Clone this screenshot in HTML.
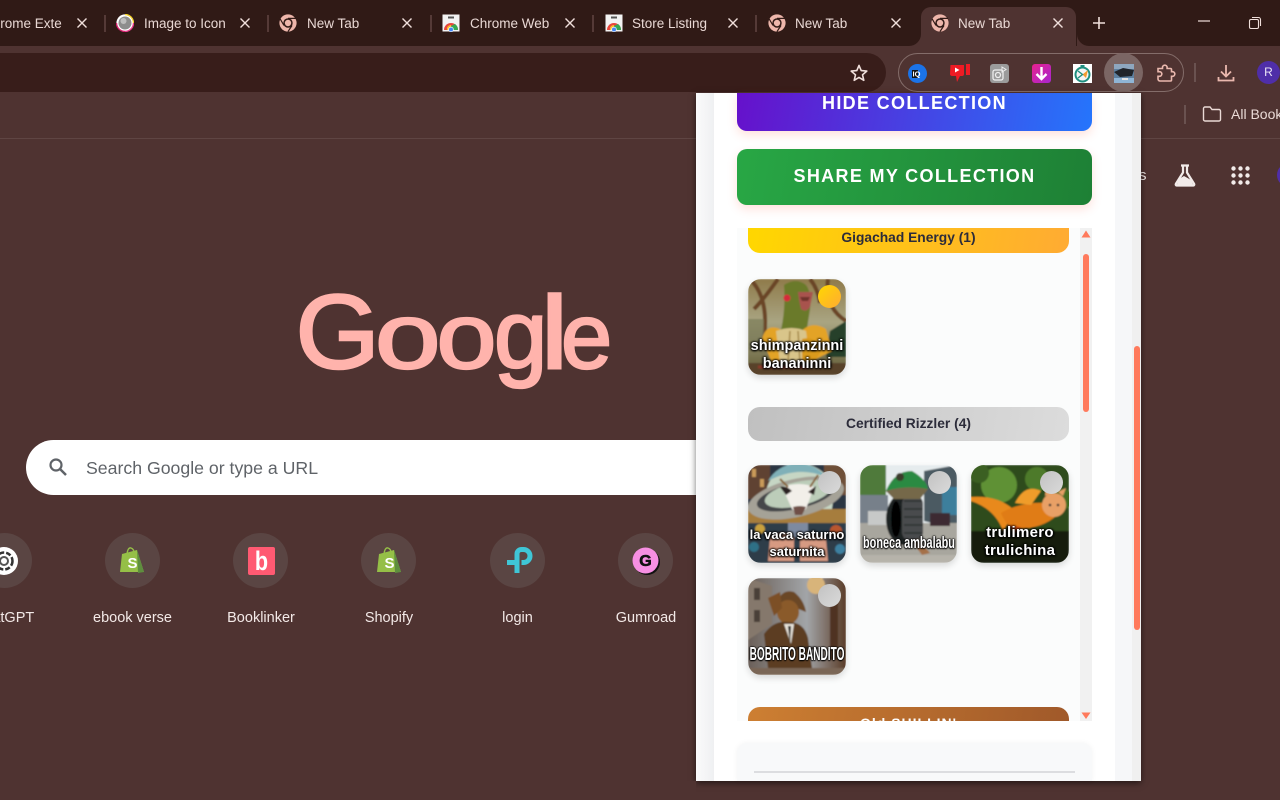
<!DOCTYPE html>
<html><head><meta charset="utf-8"><title>New Tab</title>
<style>
*{box-sizing:border-box}
html,body{margin:0;padding:0;width:1280px;height:800px;overflow:hidden;background:#4f3331;font-family:"Liberation Sans",sans-serif}
.a{position:absolute}
.tt{position:absolute;top:15px;font-size:13.5px;line-height:17px;color:#e9d8d4;white-space:nowrap;overflow:hidden}
.sep{position:absolute;top:15px;width:2px;height:17px;background:#553a37}
.x{position:absolute;top:16px;width:14px;height:14px}
.lbl{position:absolute;top:609px;width:120px;text-align:center;font-size:14.5px;line-height:18px;color:#f3e9e7}
.tile{position:absolute;top:533px;width:55px;height:55px;border-radius:50%;background:#5a4543}
.hd{position:absolute;left:748px;width:321px;text-align:center;font-size:13.8px;font-weight:bold;color:#2c2c3a;border-radius:0 0 12px 12px}
.card{position:absolute;width:98px;height:98px;border-radius:13px;overflow:hidden;box-shadow:0 3px 7px rgba(0,0,0,.14)}
.card svg{position:absolute;left:0;top:0}
.cap{position:absolute;left:-50%;width:200%;text-align:center;color:#fff;font-weight:bold;font-size:14.5px;line-height:18px;white-space:nowrap;text-shadow:0 0 2px #000,0 1px 2px #000,1px 0 2px #000,-1px 0 2px #000}
.dot{position:absolute;left:70px;top:6px;width:23px;height:23px;border-radius:50%;background:linear-gradient(135deg,#c2c2c2,#dadada)}
</style></head><body>

<div class="a" style="left:0;top:0;width:1280px;height:46px;background:#301a16"></div>
<div class="a" style="left:0;top:46px;width:1280px;height:46px;background:#4f3331"></div>
<div class="a" style="left:-30px;top:53px;width:916px;height:39px;border-radius:20px;background:#381d1a"></div>
<div class="a" style="left:921px;top:7px;width:155px;height:39px;background:#4f3331;border-radius:10px 10px 0 0"></div>
<svg class="a" style="left:909px;top:34px" width="180" height="12"><path d="M0 12A12 12 0 0 0 12 0V12ZM180 12A12 12 0 0 1 168 0V12Z" fill="#4f3331"/></svg>

<div class="tt" style="left:0;width:62px;text-indent:-17px">Chrome Extensions</div>
<div class="tt" style="left:144px;width:81px">Image to Icon</div>
<div class="tt" style="left:307px;width:82px">New Tab</div>
<div class="tt" style="left:470px;width:79px">Chrome Web Store</div>
<div class="tt" style="left:632px;width:84px">Store Listing</div>
<div class="tt" style="left:795px;width:82px">New Tab</div>
<div class="tt" style="left:958px;width:82px">New Tab</div>

<div class="sep" style="left:104px"></div><div class="sep" style="left:267px"></div><div class="sep" style="left:430px"></div><div class="sep" style="left:592px"></div><div class="sep" style="left:755px"></div>

<svg width="0" height="0" style="position:absolute"><defs>
<symbol id="xx" viewBox="0 0 14 14"><path d="M2.500 2.500L11.500 11.500M11.500 2.500L2.500 11.500" stroke="#f0dfdb" stroke-width="1.400"/></symbol>
<symbol id="chr" viewBox="0 0 18 18"><circle cx="9" cy="9" r="8.600" fill="#eeb6ab"/><circle cx="9" cy="9" r="4.700" fill="#301a16"/><circle cx="9" cy="9" r="3.200" fill="#eeb6ab"/><path d="M9 4.400H17M5 11.500L1.200 5M13 11.500L9 17.600" stroke="#301a16" stroke-width="1.200"/></symbol>
<symbol id="cws" viewBox="0 0 18 18"><rect x="0.500" y="0.500" width="17" height="17" fill="#f3f3f3"/><rect x="6" y="2.500" width="6" height="2" fill="#555"/><path d="M2 16A7 7 0 0 1 16 16Z" fill="#e8453c"/><path d="M9 16L5 16A4 4 0 0 1 9 11Z" fill="#f9bb2d"/><path d="M9 16H16A7 7 0 0 0 13 10L9 12Z" fill="#34a853"/><circle cx="9" cy="15.500" r="2.700" fill="#fff"/><circle cx="9" cy="15.500" r="2" fill="#4285f4"/></symbol>
<filter id="b" x="0" y="0" width="100%" height="100%"><feGaussianBlur stdDeviation=".7"/></filter>
</defs></svg>

<svg class="a x" style="left:75px"><use href="#xx" width="14" height="14"/></svg>
<svg class="a x" style="left:238px"><use href="#xx" width="14" height="14"/></svg>
<svg class="a x" style="left:400px"><use href="#xx" width="14" height="14"/></svg>
<svg class="a x" style="left:563px"><use href="#xx" width="14" height="14"/></svg>
<svg class="a x" style="left:726px"><use href="#xx" width="14" height="14"/></svg>
<svg class="a x" style="left:889px"><use href="#xx" width="14" height="14"/></svg>
<svg class="a x" style="left:1051px"><use href="#xx" width="14" height="14"/></svg>

<svg class="a" style="left:116px;top:14px" width="18" height="18"><circle cx="9" cy="9" r="8.600" fill="#fff"/><path d="M9 .5A8.500 8.500 0 0 1 17.500 9" stroke="#f6d32d" stroke-width="1.400" fill="none"/><path d="M17.500 9A8.500 8.500 0 0 1 9 17.500" stroke="#e83e8c" stroke-width="1.400" fill="none"/><path d="M.5 9A8.500 8.500 0 0 0 9 17.500" stroke="#d6246e" stroke-width="1.400" fill="none"/><circle cx="9" cy="9" r="6.500" fill="#8d8d8d"/><circle cx="7.500" cy="7" r="3" fill="#bdbdbd"/></svg>
<svg class="a" style="left:279px;top:14px" width="18" height="18"><use href="#chr" width="18" height="18"/></svg>
<svg class="a" style="left:442px;top:14px" width="18" height="18"><use href="#cws" width="18" height="18"/></svg>
<svg class="a" style="left:605px;top:14px" width="18" height="18"><use href="#cws" width="18" height="18"/></svg>
<svg class="a" style="left:768px;top:14px" width="18" height="18"><use href="#chr" width="18" height="18"/></svg>
<svg class="a" style="left:931px;top:14px" width="18" height="18"><use href="#chr" width="18" height="18"/></svg>

<svg class="a" style="left:1091px;top:15px" width="16" height="16"><path d="M8 2V14M2 8H14" stroke="#f0dfdb" stroke-width="1.600"/></svg>
<svg class="a" style="left:1196px;top:15px" width="16" height="14"><path d="M2 6H14" stroke="#f0dfdb" stroke-width="1.200"/></svg>
<svg class="a" style="left:1247px;top:15px" width="16" height="16"><rect x="2.500" y="4.500" width="9" height="9" rx="1.500" fill="none" stroke="#f0dfdb" stroke-width="1.100"/><path d="M5 2.500H11.500A2 2 0 0 1 13.500 4.500V11" fill="none" stroke="#f0dfdb" stroke-width="1.100"/></svg>

<svg class="a" style="left:849px;top:63px" width="20" height="20" viewBox="0 0 20 20"><path d="M10 2.400L12.200 7.600 17.800 8.100 13.500 11.800 14.800 17.300 10 14.400 5.200 17.300 6.500 11.800 2.200 8.100 7.800 7.600Z" fill="none" stroke="#f0dfdb" stroke-width="1.600" stroke-linejoin="round"/></svg>

<div class="a" style="left:898px;top:53px;width:286px;height:39px;border-radius:20px;border:1px solid #846d6a"></div>
<div class="a" style="left:1104px;top:53px;width:39px;height:39px;border-radius:50%;background:#7b6664"></div>
<svg class="a" style="left:908px;top:64px" width="19" height="19"><circle cx="9.500" cy="9.500" r="9.500" fill="#1b73e8"/><rect x="4" y="6" width="6" height="8" fill="#111"/><text x="4.500" y="12.500" font-size="7.500" font-weight="bold" fill="#fff" font-family="Liberation Sans">IQ</text></svg>
<svg class="a" style="left:949px;top:62px" width="22" height="21" viewBox="0 0 22 21"><path d="M1.500 3H15V12Q15 14 13 14H11L8 20 7 14H3.500Q1 14 1 12Z" fill="#ee1b24"/><rect x="17" y="2" width="4" height="11" fill="#ee1b24"/><path d="M6 5.500L10.500 8 6 10.500Z" fill="#fff"/></svg>
<svg class="a" style="left:990px;top:64px" width="19" height="19"><rect width="19" height="19" rx="3" fill="#9b9b9b"/><rect x="3" y="6" width="10" height="10" rx="2" fill="none" stroke="#eee" stroke-width="1.300"/><circle cx="8" cy="11" r="2.500" fill="none" stroke="#eee" stroke-width="1.300"/><path d="M12 3L16 5.500 12 8Z" fill="none" stroke="#eee"/></svg>
<svg class="a" style="left:1032px;top:64px" width="19" height="19"><defs><linearGradient id="pk" x1="0" y1="0" x2="1" y2="1"><stop offset="0" stop-color="#e8228e"/><stop offset="1" stop-color="#a626d0"/></linearGradient></defs><rect width="19" height="19" rx="3" fill="url(#pk)"/><path d="M9.500 3V15M4.500 10L9.500 15 14.500 10" fill="none" stroke="#fff" stroke-width="2.400"/></svg>
<svg class="a" style="left:1073px;top:64px" width="19" height="19"><rect width="19" height="19" fill="#fff"/><circle cx="9.500" cy="10.500" r="7" fill="#f3f3f3" stroke="#1f8f80" stroke-width="2"/><rect x="7.500" y="1" width="4" height="2" fill="#1f8f80"/><path d="M9.500 10.500L15 6 13 14Z" fill="#f49b2c"/><path d="M5 7L9.500 10.500 5 14" fill="none" stroke="#1f8f80" stroke-width="1.400"/></svg>
<svg class="a" style="left:1114px;top:64px" width="20" height="19"><rect width="20" height="19" fill="#5d7f9e"/><rect width="20" height="5" fill="#8ea7bf"/><path d="M0 8L9 4 20 6 18 12 6 13Z" fill="#20242a"/><rect y="14" width="20" height="5" fill="#8fb5d6"/><path d="M8 14H14V16H8Z" fill="#e3e3e3"/></svg>
<svg class="a" style="left:1155px;top:63px" width="21" height="20" viewBox="0 0 21 20"><path d="M3 5.500H7.500V4.500A2.300 2.300 0 0 1 12.100 4.500V5.500H15.500A1 1 0 0 1 16.500 6.500V8.700H17.500A2.300 2.300 0 0 1 17.500 13.300H16.500V17A1 1 0 0 1 15.500 18H5A2 2 0 0 1 3 16V13.300H4.500A2.300 2.300 0 0 0 4.500 8.700H3Z" fill="none" stroke="#eab8ae" stroke-width="1.600"/></svg>
<div class="a" style="left:1194px;top:63px;width:2px;height:19px;background:#6a5250"></div>
<svg class="a" style="left:1216px;top:63px" width="20" height="20" viewBox="0 0 20 20"><path d="M10 2V13M5 8.500L10 13.500 15 8.500M2.500 14V17.500H17.500V14" fill="none" stroke="#eab8ae" stroke-width="1.800"/></svg>
<div class="a" style="left:1257px;top:61px;width:23px;height:23px;border-radius:50%;background:#4f2ea8;color:#e9e4f5;font-size:12px;line-height:23px;text-align:center">R</div>

<div class="a" style="left:1184px;top:105px;width:2px;height:19px;background:#6a5250"></div>
<svg class="a" style="left:1202px;top:105px" width="20" height="18"><path d="M1.500 3.500A1.500 1.500 0 0 1 3 2H8L10 4.500H17A1.500 1.500 0 0 1 18.500 6V14.500A1.500 1.500 0 0 1 17 16H3A1.500 1.500 0 0 1 1.500 14.500Z" fill="none" stroke="#eadad6" stroke-width="1.400"/></svg>
<div class="a" style="left:1231px;top:106px;font-size:14px;line-height:17px;color:#eadad6;white-space:nowrap">All Bookmarks</div>
<div class="a" style="left:0;top:138px;width:1280px;height:1px;background:#5f4543"></div>

<!-- Google logo -->
<svg class="a" style="left:280px;top:270px" width="350" height="135" font-family="Liberation Sans" fill="#ffb3ac" stroke="#ffb3ac" stroke-width="2.400">
<text transform="translate(15.600,98) scale(1.080,1.050)" font-size="100">G</text>
<text transform="translate(95,98) scale(1.180,.93)" font-size="100">o</text>
<text transform="translate(156.500,98) scale(1.080,.93)" font-size="100">o</text>
<text transform="translate(214,98) scale(.96,.97)" font-size="100">g</text>
<text transform="translate(260.600,98) scale(1.250,1.030)" font-size="100">l</text>
<text transform="translate(281,98) scale(.92,.93)" font-size="100">e</text>
</svg>

<div class="a" style="left:26px;top:440px;width:700px;height:55px;border-radius:28px;background:#fff"></div>
<svg class="a" style="left:47px;top:456px" width="22" height="22" viewBox="0 0 22 22"><circle cx="9" cy="9" r="5.500" fill="none" stroke="#5f6368" stroke-width="2.200"/><path d="M13 13L19 19" stroke="#5f6368" stroke-width="2.500"/></svg>
<div class="a" style="left:86px;top:457px;font-size:17.700px;line-height:22px;color:#5f6368;white-space:nowrap">Search Google or type a URL</div>

<div class="tile" style="left:-23px"></div><div class="tile" style="left:105px"></div><div class="tile" style="left:233px"></div><div class="tile" style="left:361px"></div><div class="tile" style="left:490px"></div><div class="tile" style="left:618px"></div>
<svg class="a" style="left:-10px;top:547px" width="28" height="28"><circle cx="14" cy="14" r="14" fill="#fff"/><circle cx="14" cy="14" r="8.500" fill="none" stroke="#333" stroke-width="2.500" stroke-dasharray="5 2"/><circle cx="14" cy="14" r="4" fill="none" stroke="#555" stroke-width="2"/></svg>
<svg class="a" style="left:119px;top:546px" width="27" height="29" viewBox="0 0 27 29"><path d="M3 8L18 4 25 26 1 26Z" fill="#95bf47"/><path d="M18 4L25 26 19 27Z" fill="#5e8e3e"/><path d="M8 8Q9 1 12 2T15 7" fill="none" stroke="#95bf47" stroke-width="1.400"/><text x="8.500" y="22" font-size="15" font-weight="bold" fill="#fff" font-family="Liberation Sans">S</text></svg>
<div class="a" style="left:248px;top:547px;width:27px;height:28px;background:#ff5a72;border-radius:2px"></div>
<div class="a" style="left:248px;top:548px;width:27px;color:#fff;font-weight:bold;font-size:27px;line-height:26px;text-align:center;transform:scaleX(.8)">b</div>
<svg class="a" style="left:376px;top:546px" width="27" height="29" viewBox="0 0 27 29"><path d="M3 8L18 4 25 26 1 26Z" fill="#95bf47"/><path d="M18 4L25 26 19 27Z" fill="#5e8e3e"/><path d="M8 8Q9 1 12 2T15 7" fill="none" stroke="#95bf47" stroke-width="1.400"/><text x="8.500" y="22" font-size="15" font-weight="bold" fill="#fff" font-family="Liberation Sans">S</text></svg>
<svg class="a" style="left:504px;top:546px" width="30" height="30" viewBox="0 0 30 30"><path d="M13 15V8A4.500 4.500 0 0 1 17.500 3.500H19.500A6.500 6.500 0 0 1 19.500 16.500H17.500" fill="none" stroke="#3fc6d6" stroke-width="5"/><path d="M3 16.500H13V27" fill="none" stroke="#3fc6d6" stroke-width="5"/></svg>
<svg class="a" style="left:632px;top:547px" width="28" height="28"><circle cx="15" cy="15" r="13" fill="#111"/><circle cx="13.500" cy="13.500" r="13" fill="#f78fe3"/><text x="13.500" y="19" text-anchor="middle" font-size="16" font-weight="bold" fill="#111" stroke="#111" stroke-width=".6" font-family="Liberation Sans">G</text></svg>
<div class="lbl" style="left:-56px">ChatGPT</div><div class="lbl" style="left:72.500px">ebook verse</div><div class="lbl" style="left:201px">Booklinker</div><div class="lbl" style="left:329px">Shopify</div><div class="lbl" style="left:457.500px">login</div><div class="lbl" style="left:586px">Gumroad</div>

<div class="a" style="left:1139px;top:167px;font-size:15px;line-height:18px;color:#f0e8e6">s</div>
<svg class="a" style="left:1173px;top:163px" width="24" height="24" viewBox="0 0 24 24"><path d="M8 2.500H16M10 3V9.500L2.800 21A1 1 0 0 0 3.800 22.500H20.200A1 1 0 0 0 21.200 21L14 9.500V3" fill="none" stroke="#f2ebe9" stroke-width="2.200"/><path d="M6 16L11 13 18 17 20 21.500H4Z" fill="#f2ebe9"/></svg>
<svg class="a" style="left:1231px;top:166px" width="19" height="19" fill="#f2ebe9"><circle cx="2.500" cy="2.500" r="2.200"/><circle cx="9.500" cy="2.500" r="2.200"/><circle cx="16.500" cy="2.500" r="2.200"/><circle cx="2.500" cy="9.500" r="2.200"/><circle cx="9.500" cy="9.500" r="2.200"/><circle cx="16.500" cy="9.500" r="2.200"/><circle cx="2.500" cy="16.500" r="2.200"/><circle cx="9.500" cy="16.500" r="2.200"/><circle cx="16.500" cy="16.500" r="2.200"/></svg>
<div class="a" style="left:1277px;top:163px;width:24px;height:24px;border-radius:50%;background:#4f2ea8"></div>

<!-- popup -->
<div class="a" style="left:696px;top:93px;width:445px;height:688px;background:#fff;box-shadow:0 2px 6px rgba(0,0,0,.55);overflow:hidden">
  <div class="a" style="left:0;top:0;width:18px;height:688px;background:linear-gradient(90deg,#fafafb,#eff0f2)"></div>
  <div class="a" style="left:419px;top:0;width:17px;height:688px;background:#f6f7f9"></div>
  <div class="a" style="left:436px;top:0;width:9px;height:688px;background:#f0f0f0"></div>
  <div class="a" style="left:438px;top:253px;width:6px;height:284px;border-radius:3px;background:#ff7a5c"></div>
</div>

<div class="a" style="left:737px;top:93px;width:355px;height:38px;border-radius:0 0 10px 10px;background:linear-gradient(100deg,#6611cb,#2575fc);box-shadow:0 4px 10px rgba(255,90,60,.18);color:#fff;font-weight:bold;font-size:18px;letter-spacing:1.330px;text-align:center;line-height:21px;white-space:nowrap">HIDE COLLECTION</div>
<div class="a" style="left:737px;top:149px;width:355px;height:56px;border-radius:10px;background:linear-gradient(100deg,#28a745,#1e8035);box-shadow:0 4px 10px rgba(255,90,60,.18);color:#fff;font-weight:bold;font-size:18px;letter-spacing:1.330px;text-align:center;line-height:55px;white-space:nowrap">SHARE MY COLLECTION</div>

<div class="a" style="left:737px;top:228px;width:355px;height:493px;background:#fbfcfc"></div>
<div class="a" style="left:1080px;top:228px;width:12px;height:493px;background:#f1f1f1"></div>
<div class="a" style="left:1083px;top:254px;width:6px;height:158px;border-radius:3px;background:#ff7a5c"></div>
<svg class="a" style="left:1081px;top:230px" width="10" height="8"><path d="M5 0.500L9.500 7.500H.5Z" fill="#ff7a5c"/></svg>
<svg class="a" style="left:1081px;top:712px" width="10" height="8"><path d="M5 7L9.500 .5H.5Z" fill="#ff7a5c"/></svg>

<div class="hd" style="top:228px;height:25px;line-height:20px;background:linear-gradient(100deg,#ffd700,#ffab33)">Gigachad Energy (1)</div>
<div class="hd" style="top:407px;height:34px;line-height:34px;border-radius:12px;background:linear-gradient(100deg,#c0c0c0,#dcdcdc)">Certified Rizzler (4)</div>
<div class="a" style="left:748px;top:707px;width:321px;height:14px;overflow:hidden;border-radius:12px 12px 0 0;background:linear-gradient(100deg,#cd7f32,#a0592a);color:#fff;font-size:14px;letter-spacing:1px;font-weight:bold;text-align:center;line-height:33px">Old SHILLIN'</div>

<!-- card 1 monkey -->
<div class="card" style="left:748px;top:279px;height:96px">
<svg width="98" height="96" viewBox="0 0 98 96"><defs><linearGradient id="j" x1="0" y1="0" x2="0" y2="1"><stop offset="0" stop-color="#8f7a4a"/><stop offset=".45" stop-color="#a9a582"/><stop offset="1" stop-color="#5f5a35"/></linearGradient></defs><g filter="url(#b)"><rect width="98" height="96" fill="url(#j)"/><path d="M2 0Q24 22 14 70M6 30Q16 20 30 0M80 0Q76 28 98 42M62 0Q70 10 72 24" stroke="#6a4426" stroke-width="4" fill="none"/><path d="M82 52L98 42V78H78Z" fill="#26412a"/><path d="M0 40H16V70H0Z" fill="#7b7a58" opacity=".7"/><path d="M36 6Q48-2 58 6 64 14 62 30L58 56H32Q38 30 36 6Z" fill="#6b7a2b"/><path d="M50 13H65L62 28Q58 34 53 30 51 22 50 13Z" fill="#a8524e"/><path d="M52 18L62 18 60 22H54Z" fill="#70302c"/><circle cx="39" cy="19" r="3.500" fill="#d52c3a"/><path d="M14 60Q18 44 32 50L46 84H24ZM50 56Q62 40 78 50L84 72 60 84Z" fill="#e3a325"/><path d="M28 52Q44 46 58 52L62 84H32Z" fill="#d9c58a"/><path d="M42 52L40 84M50 52L52 84" stroke="#a68a4a" stroke-width="1.500"/><path d="M54 60Q66 56 74 70L66 84H54Z" fill="#d99a1a"/><path d="M0 84H98V96H0Z" fill="#59422a"/><path d="M10 88H60" stroke="#8a3b2a" stroke-width="3"/></g></svg>
<div class="dot" style="background:linear-gradient(135deg,#ffd700,#ffab33)"></div>
<div class="cap" style="top:58px">shimpanzinni</div><div class="cap" style="top:76px">bananinni</div></div>

<!-- card 2 cow -->
<div class="card" style="left:748px;top:465px">
<svg width="98" height="98" viewBox="0 0 98 98"><g filter="url(#b)"><rect width="98" height="98" fill="#2b3442"/><rect width="22" height="34" fill="#5e4330"/><rect x="4" y="4" width="4" height="8" fill="#c99a5a"/><rect x="12" y="14" width="4" height="8" fill="#c99a5a"/><rect x="76" width="22" height="30" fill="#6e5038"/><rect y="44" width="98" height="14" fill="#a67d3d"/><path d="M0 58h98v40H0z" fill="#2d3c4a"/><circle cx="12" cy="64" r="5" fill="#c9a13c"/><circle cx="88" cy="66" r="6" fill="#b9562f"/><circle cx="92" cy="84" r="5" fill="#3d80a0"/><circle cx="6" cy="82" r="5" fill="#2f6f86"/><path d="M22 72Q34 64 46 72L46 96H20ZM52 72Q64 64 78 74L80 96H52Z" fill="#d79a82"/><path d="M40 58H60V72H40Z" fill="#7d8aa0"/><path d="M18 34A34 32 0 0 1 86 28L84 44H20Z" fill="#c6d6c4"/><path d="M20 16A34 32 0 0 1 78 12Q50 0 20 16Z" fill="#7fb0b8"/><ellipse cx="48" cy="33" rx="49" ry="19" fill="#a5a297" transform="rotate(-13 48 33)"/><ellipse cx="48" cy="31" rx="40" ry="13" fill="#45464a" transform="rotate(-13 48 31)"/><ellipse cx="50" cy="29" rx="34" ry="12" fill="#bccdb9" transform="rotate(-13 50 29)"/><path d="M34 22Q52 16 66 22L58 44Q50 50 44 44Z" fill="#f2efe9"/><path d="M32 22Q38 20 44 26L38 30ZM68 21L60 27 66 30Z" fill="#2a2320"/><path d="M45 42Q52 40 58 42L54 50H47Z" fill="#6f5046"/><path d="M32 14L40 22M70 10L62 22" stroke="#87653b" stroke-width="2"/></g></svg>
<div class="dot"></div>
<div class="cap" style="top:61px;font-size:13px">la vaca saturno</div><div class="cap" style="top:78px;font-size:13px">saturnita</div></div>

<!-- card 3 tire -->
<div class="card" style="left:860px;top:465px;width:97px">
<svg width="97" height="98" viewBox="0 0 97 98"><g filter="url(#b)"><rect width="97" height="98" fill="#e6ecee"/><path d="M0 0H26V40H0Z" fill="#4f7a3a"/><path d="M0 30H28V60H0Z" fill="#77808a"/><path d="M64 6L97 0V64L64 56Z" fill="#4c5a62"/><path d="M82 22H97V50H82Z" fill="#3d7f9c"/><rect y="58" width="97" height="40" fill="#a8a69e"/><rect x="8" y="46" width="20" height="14" fill="#c7c9c8"/><rect x="70" y="48" width="20" height="13" fill="#3c2a30"/><ellipse cx="44" cy="54" rx="18" ry="26" fill="#1f2022"/><ellipse cx="36" cy="54" rx="5" ry="18" fill="#050505"/><rect x="42" y="30" width="21" height="46" rx="9" fill="#4a4b4d"/><path d="M44 36H62M44 44H63M44 52H63M44 60H63M44 68H62" stroke="#2d2e30" stroke-width="1.500"/><path d="M26 26Q34 6 52 6 66 14 68 24L56 30H32Z" fill="#2a8a42"/><path d="M26 26Q46 20 68 24L60 34H34Z" fill="#756849"/><circle cx="40" cy="12" r="4" fill="#3b3a2c"/><path d="M52 76L62 90 70 88 58 74Z" fill="#a5714a"/><rect y="90" width="97" height="8" fill="#b6b3aa"/></g></svg>
<div class="dot" style="left:68px"></div>
<div class="cap" style="top:69px;font-size:17px;transform:scaleX(.64)">boneca ambalabu</div></div>

<!-- card 4 fish -->
<div class="card" style="left:971px;top:465px">
<svg width="98" height="98" viewBox="0 0 98 98"><g filter="url(#b)"><rect width="98" height="98" fill="#2e4c1b"/><circle cx="28" cy="20" r="18" fill="#5f9136"/><circle cx="8" cy="8" r="10" fill="#3a5f22"/><circle cx="66" cy="14" r="12" fill="#4d7a2a"/><circle cx="92" cy="34" r="10" fill="#426c24"/><rect y="66" width="98" height="32" fill="#121a0a"/><path d="M0 32Q26 30 42 44 36 62 32 66 24 44 0 36Z" fill="#e8891a"/><path d="M30 48Q50 36 78 38L86 50Q72 64 44 64 36 62 30 48Z" fill="#e07c14"/><path d="M44 38Q54 18 70 26L60 40Z" fill="#ef9c2b"/><path d="M36 60L44 68 50 62Z" fill="#d64d12"/><circle cx="83" cy="40" r="12" fill="#e8a066"/><path d="M74 31L75 22 82 28ZM92 31L95 23 87 27Z" fill="#e8a066"/><circle cx="79" cy="40" r="1.300" fill="#333"/><circle cx="87" cy="40" r="1.300" fill="#333"/></g></svg>
<div class="dot" style="left:69px"></div>
<div class="cap" style="top:59px;font-size:15px;letter-spacing:.3px">trulimero</div><div class="cap" style="top:77px;font-size:15px;letter-spacing:.3px">trulichina</div></div>

<!-- card 5 beaver -->
<div class="card" style="left:748px;top:578px;height:97px">
<svg width="98" height="97" viewBox="0 0 98 97"><defs><linearGradient id="st" x1="0" y1="0" x2="1" y2="0"><stop offset="0" stop-color="#6a5f58"/><stop offset=".6" stop-color="#a2a5a8"/><stop offset="1" stop-color="#5a3c28"/></linearGradient></defs><g filter="url(#b)"><rect width="98" height="97" fill="url(#st)"/><path d="M0 0L24 8V46L0 62Z" fill="#85786c"/><path d="M6 10H12V22H6ZM6 32H12V44H6Z" fill="#4a4038"/><rect x="82" y="12" width="8" height="70" fill="#4f3320"/><circle cx="68" cy="7" r="9" fill="#d8b47a"/><path d="M28 26Q34 10 46 14 56 22 58 34L48 30Q36 26 28 26Z" fill="#6b4726"/><ellipse cx="40" cy="34" rx="11" ry="12" fill="#8a5a2a"/><path d="M26 38L20 20 32 14 34 30Z" fill="#7c5027"/><path d="M16 56Q26 42 40 44 56 44 60 60L64 90H20Z" fill="#5c3e24"/><path d="M36 46H46L43 66Z" fill="#e8e3da"/><path d="M40 48H43L42 66Z" fill="#222"/><path d="M48 70H70" stroke="#2b241f" stroke-width="3"/><rect y="90" width="98" height="7" fill="#7a6656"/></g></svg>
<div class="dot"></div>
<div class="cap" style="top:67px;font-size:18px;transform:scaleX(.56)">BOBRITO BANDITO</div></div>

<div class="a" style="left:737px;top:743px;width:355px;height:38px;border-radius:10px 10px 0 0;background:#f8f9fa;box-shadow:0 0 6px rgba(0,0,0,.05)"></div>
<div class="a" style="left:754px;top:771px;width:321px;height:2px;background:#dcdde0"></div>
<div class="a" style="left:0;top:781px;width:696px;height:19px;background:#4f3331"></div>

</body></html>
